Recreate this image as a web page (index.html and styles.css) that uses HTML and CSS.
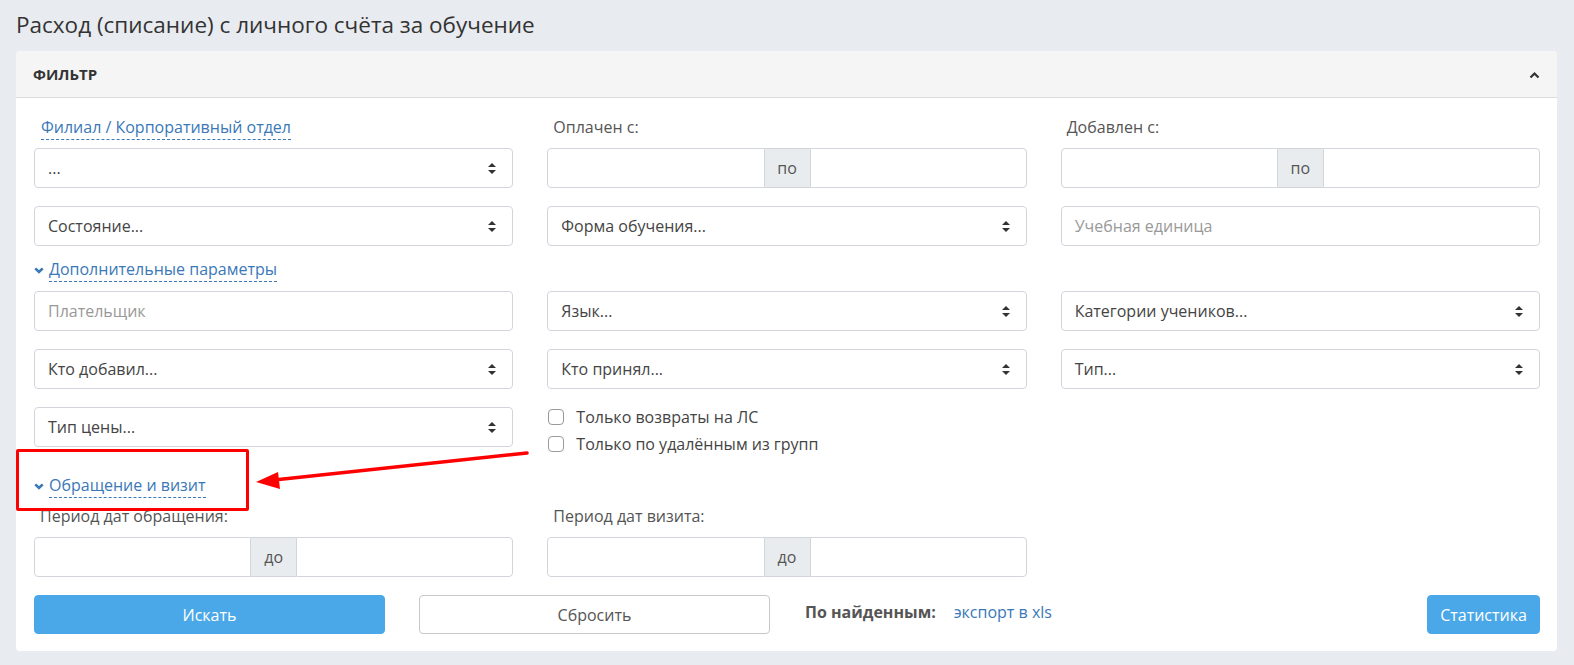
FILE: index.html
```html
<!DOCTYPE html>
<html lang="ru">
<head>
<meta charset="utf-8">
<title>Расход (списание) с личного счёта за обучение</title>
<link rel="stylesheet" href="styles.css">
</head>
<body>
<h1 class="page-title">Расход (списание) с личного счёта за обучение</h1>

<div class="panel">
  <div class="panel-heading">
    <span class="panel-title">ФИЛЬТР</span>
    <svg class="collapse-icon" width="11" height="8" viewBox="0 0 11 8"><polyline points="1.5,6.5 5.5,2.5 9.5,6.5" fill="none" stroke="#333" stroke-width="2.2"/></svg>
  </div>

  <div class="panel-body">
    <div class="grid">
      <div class="field">
        <div class="label"><a class="dashed-link">Филиал / Корпоративный отдел</a></div>
        <div class="select"><span>...</span><i class="caret"></i></div>
      </div>
      <div class="field">
        <div class="label plain">Оплачен с:</div>
        <div class="input-group"><div class="input"></div><div class="addon">по</div><div class="input"></div></div>
      </div>
      <div class="field">
        <div class="label plain">Добавлен с:</div>
        <div class="input-group"><div class="input"></div><div class="addon">по</div><div class="input"></div></div>
      </div>

      <div class="select"><span>Состояние...</span><i class="caret"></i></div>
      <div class="select"><span>Форма обучения...</span><i class="caret"></i></div>
      <div class="input text placeholder">Учебная единица</div>
    </div>

    <div class="toggle toggle-extra">
      <svg class="chev" width="10" height="7" viewBox="0 0 10 7"><polyline points="1.3,1.3 5,5 8.7,1.3" fill="none" stroke="#3a78b8" stroke-width="2.6"/></svg>
      <a class="dashed-link">Дополнительные параметры</a>
    </div>

    <div class="grid">
      <div class="input text placeholder">Плательщик</div>
      <div class="select"><span>Язык...</span><i class="caret"></i></div>
      <div class="select"><span>Категории учеников...</span><i class="caret"></i></div>

      <div class="select"><span>Кто добавил...</span><i class="caret"></i></div>
      <div class="select"><span>Кто принял...</span><i class="caret"></i></div>
      <div class="select"><span>Тип...</span><i class="caret"></i></div>

      <div class="select"><span>Тип цены...</span><i class="caret"></i></div>
      <div class="checks">
        <label class="check"><span class="box"></span>Только возвраты на ЛС</label>
        <label class="check"><span class="box"></span>Только по удалённым из групп</label>
      </div>
      <div></div>
    </div>

    <div class="toggle toggle-visit">
      <svg class="chev" width="10" height="7" viewBox="0 0 10 7"><polyline points="1.3,1.3 5,5 8.7,1.3" fill="none" stroke="#3a78b8" stroke-width="2.6"/></svg>
      <a class="dashed-link">Обращение и визит</a>
    </div>

    <div class="grid">
      <div class="field">
        <div class="label plain">Период дат обращения:</div>
        <div class="input-group"><div class="input"></div><div class="addon">до</div><div class="input"></div></div>
      </div>
      <div class="field">
        <div class="label plain">Период дат визита:</div>
        <div class="input-group"><div class="input"></div><div class="addon">до</div><div class="input"></div></div>
      </div>
      <div></div>
    </div>

    <div class="actions">
      <button class="btn btn-primary btn-search">Искать</button>
      <button class="btn btn-default btn-reset">Сбросить</button>
      <div class="found">
        <b>По найденным:</b>
        <a class="export">экспорт в xls</a>
      </div>
      <button class="btn btn-primary btn-stats">Статистика</button>
    </div>
  </div>
</div>

<!-- annotation pointing at the "Обращение и визит" toggle -->
<div class="callout-box"></div>
<svg class="callout-arrow" width="300" height="50" viewBox="0 0 300 50">
  <line x1="275" y1="4" x2="22" y2="31" stroke="#f00" stroke-width="3.5" stroke-linecap="round"/>
  <polygon points="4,33 26,23 28,40" fill="#f00"/>
</svg>
</body>
</html>
```

FILE: styles.css
```css
* { box-sizing: border-box; }

html, body {
  margin: 0;
  padding: 0;
}

body {
  background: #e8ebf0;
  font-family: "Open Sans", "Liberation Sans", sans-serif;
  font-size: 16px;
  color: #333;
  padding: 0 17px 0 16px;
  position: relative;
  height: 665px;
  overflow: hidden;
}

.page-title {
  margin: 0;
  height: 51px;
  line-height: 50px;
  font-size: 22.5px;
  font-weight: 400;
  color: #333;
}

.panel {
  background: #fff;
  border-radius: 4px;
}

.panel-heading {
  height: 47px;
  background: #f5f5f5;
  border-bottom: 1px solid #dcdcdc;
  border-radius: 4px 4px 0 0;
  display: flex;
  align-items: center;
  justify-content: space-between;
  padding: 0 17px 0 17px;
}

.panel-title {
  font-weight: 700;
  font-size: 15px;
  color: #333;
}

.collapse-icon { margin-top: 1px; }

.panel-body {
  padding: 18px 17px 17px 18px;
}

.grid {
  display: grid;
  grid-template-columns: 1fr 1fr 1fr;
  column-gap: 34px;
  row-gap: 18px;
}

.field { display: flex; flex-direction: column; }

.label {
  height: 24px;
  line-height: 22px;
  margin-bottom: 8px;
  padding-left: 7px;
}

.label.plain { padding-left: 6px; color: #555; }

.dashed-link {
  color: #3a78b8;
  border-bottom: 1px dashed #3a78b8;
  padding-bottom: 1px;
  cursor: pointer;
}

.select, .input {
  height: 40px;
  border: 1px solid #d2d6dc;
  border-radius: 4px;
  background: #fff;
}

.select {
  display: flex;
  align-items: center;
  justify-content: space-between;
  padding: 0 16px 0 13px;
  color: #444;
}

.caret {
  width: 8px;
  height: 11px;
  position: relative;
  display: block;
}
.caret::before, .caret::after {
  content: "";
  position: absolute;
  left: 0;
  border-left: 4px solid transparent;
  border-right: 4px solid transparent;
}
.caret::before { top: 0; border-bottom: 4px solid #333; }
.caret::after { bottom: 0; border-top: 4px solid #333; }

.input.text {
  display: flex;
  align-items: center;
  padding: 0 13px;
}
.placeholder { color: #999; }

.input-group {
  display: flex;
  height: 40px;
}
.input-group .input { flex: 1; height: 40px; }
.input-group .input:first-child { border-radius: 4px 0 0 4px; }
.input-group .input:last-child { border-radius: 0 4px 4px 0; }
.addon {
  width: 45px;
  background: #e9ecef;
  border-top: 1px solid #d2d6dc;
  border-bottom: 1px solid #d2d6dc;
  display: flex;
  align-items: center;
  justify-content: center;
  color: #555;
}

.toggle {
  display: flex;
  align-items: center;
  gap: 5px;
  height: 22px;
  line-height: 22px;
}
.toggle .chev { margin-top: 1px; }
.toggle-extra { margin: 13px 0 10px 0; }
.toggle-visit { margin: 18px 0 8px 0; }

.checks {
  display: flex;
  flex-direction: column;
  margin-top: -4px;
}
.check {
  display: flex;
  align-items: center;
  height: 27px;
  color: #444;
}
.box {
  width: 16px;
  height: 16px;
  border: 1px solid #9a9a9a;
  border-radius: 4px;
  margin: 0 12px 0 1px;
}

.actions {
  display: flex;
  align-items: center;
  margin-top: 18px;
}

.btn {
  height: 39px;
  border-radius: 4px;
  font-family: "Open Sans", "Liberation Sans", sans-serif;
  font-size: 16px;
  cursor: pointer;
  padding: 0;
}
.btn-primary {
  background: #4aa8e8;
  border: 1px solid #4aa8e8;
  color: #fff;
}
.btn-default {
  background: #fff;
  border: 1px solid #c8c8c8;
  color: #555;
}
.btn-search { width: 351px; }
.btn-reset { width: 351px; margin-left: 34px; }
.btn-stats { width: 113px; margin-left: auto; }

.found {
  margin-left: 35px;
  display: flex;
  gap: 18px;
  align-items: center;
  margin-top: -6px;
}
.found b { color: #555; }
.export { color: #3a78b8; }

.callout-box {
  position: absolute;
  left: 16px;
  top: 449px;
  width: 233px;
  height: 62px;
  border: 3px solid #f00;
  border-radius: 2px;
}

.callout-arrow {
  position: absolute;
  left: 252px;
  top: 449px;
}
```
